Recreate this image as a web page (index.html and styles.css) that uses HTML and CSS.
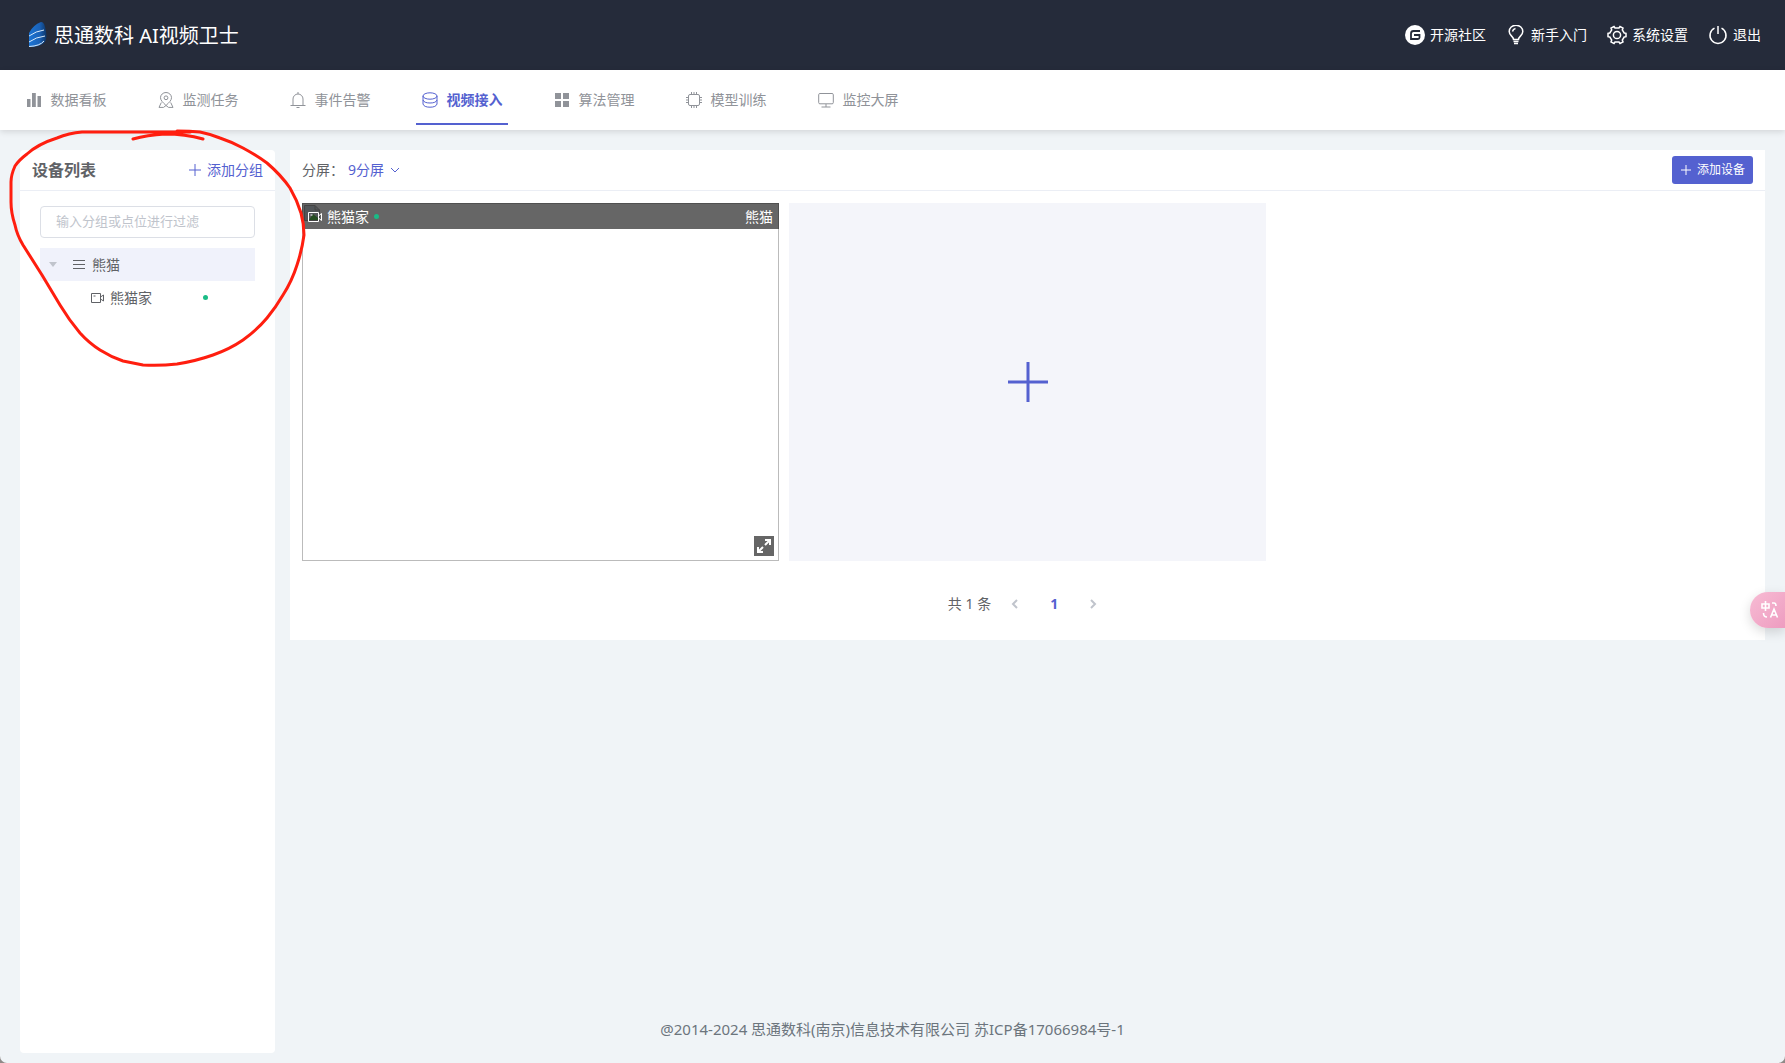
FILE: index.html
```html
<!DOCTYPE html>
<html lang="zh-CN">
<head>
<meta charset="utf-8">
<title>思通数科 AI视频卫士</title>
<link rel="stylesheet" href="styles.css">
</head>
<body>
<header class="topbar">
  <a class="brand" href="#">
    <svg class="brand-logo" viewBox="0 0 20 26">
      <defs><linearGradient id="sail" x1="0" y1="0" x2="1" y2="0"><stop offset="0" stop-color="#1c74d4"/><stop offset=".6" stop-color="#1a62b8"/><stop offset="1" stop-color="#0d3566"/></linearGradient></defs>
      <path d="M1 11Q5 3 13 0Q16 0 17 5Q20 15 17 20Q12 25 1 25Z" fill="url(#sail)"/>
      <path d="M1 14Q8 9 16 8M1 20Q8 15 17 14M1 24.500Q12 24 16 19" fill="none" stroke="#d9ebfa" stroke-width="1"/>
    </svg>
    <span>思通数科 AI视频卫士</span>
  </a>
  <nav class="links">
    <a href="#"><svg viewBox="0 0 20 20"><circle cx="10" cy="10" r="10" fill="#fff" stroke="none"/><path d="M15 6H8.500Q6 6 6 8.500V14H13Q14.500 14 14.500 12.500V10H9" fill="none" stroke="#252b3a" stroke-width="1.800"/></svg>开源社区</a>
    <a href="#"><svg class="line" viewBox="0 0 20 20"><path d="M7.500 14.500C7.500 11.500 3.200 10.500 3.200 6.500A6.800 6.300 0 0 1 16.800 6.500C16.800 10.500 12.500 11.500 12.500 14.500Z M6.500 6.500Q7 4 9.500 3.500M7.500 16.500H12.500M8 18.500H12"/></svg>新手入门</a>
    <a href="#"><svg class="line" viewBox="0 0 20 20"><path d="M7 1.500L8 3H12L13 1.500L16 3.200L15.300 5L17.200 8L19 8.300V11.700L17.200 12L15.300 15L16 16.800L13 18.500L12 17H8L7 18.500L4 16.800L4.700 15L2.800 12L1 11.700V8.300L2.800 8L4.700 5L4 3.200Z"/><circle cx="10" cy="10" r="3.600"/></svg>系统设置</a>
    <a href="#"><svg class="line" viewBox="0 0 20 20"><path d="M10 1V9M6.500 3.200A8 8 0 1 0 13.500 3.200"/></svg>退出</a>
  </nav>
</header>

<nav class="menu">
  <a href="#"><svg class="solid" viewBox="0 0 16 16"><path d="M1 7H4.500V15H1ZM6 1H9.800V15H6ZM11.500 4H15V15H11.500Z"/></svg>数据看板</a>
  <a href="#"><svg class="line" viewBox="0 0 16 16"><path d="M8 13.500C5 10.500 2.500 8.500 2.500 5.700A5.500 5.200 0 0 1 13.500 5.700C13.500 8.500 11 10.500 8 13.500ZM3.300 10.500L1 15.400H5.500L8 13.500L10.500 15.400H15L12.700 10.500"/><circle cx="8" cy="5.800" r="1.900"/></svg>监测任务</a>
  <a href="#"><svg class="line" viewBox="0 0 16 16"><path d="M8 0V2M3 13.500V7A5 5 0 0 1 13 7V13.500M.5 13.500H15.500M6.500 15.500H9.500"/></svg>事件告警</a>
  <a href="#" class="active" aria-current="page"><svg class="line" viewBox="0 0 16 16"><ellipse cx="8" cy="4" rx="7" ry="3.200"/><path d="M1 4V8Q2 11 8 11T15 8V4M1 8V12Q2 15.200 8 15.200T15 12V8"/></svg>视频接入</a>
  <a href="#"><svg class="solid" viewBox="0 0 16 16"><path d="M1 1H7V7H1ZM9 1H15V7H9ZM1 9H7V15H1ZM9 9H15V15H9Z"/></svg>算法管理</a>
  <a href="#"><svg class="line" viewBox="0 0 16 16"><rect x="2.500" y="2.500" width="11" height="11" rx="1.500"/><path d="M5.500 0V2.500M8 0V2.500M10.500 0V2.500M5.500 13.500V16M8 13.500V16M10.500 13.500V16M0 5.500H2.500M0 8H2.500M0 10.500H2.500M13.500 5.500H16M13.500 8H16M13.500 10.500H16"/></svg>模型训练</a>
  <a href="#"><svg class="line" viewBox="0 0 16 16"><rect x=".7" y="1.500" width="14.600" height="10.300" rx="1.200"/><path d="M8 12V15M3.500 15H12.500"/></svg>监控大屏</a>
</nav>

<div class="workspace">
  <aside class="panel devices">
    <div class="panel-head">
      <h2>设备列表</h2>
      <button class="link-btn" type="button"><svg class="line" viewBox="0 0 12 12"><path d="M6 0V12M0 6H12"/></svg>添加分组</button>
    </div>
    <div class="panel-body">
      <input class="filter" type="text" placeholder="输入分组或点位进行过滤" aria-label="过滤设备">
      <ul class="tree">
        <li class="node group"><svg class="caret" viewBox="0 0 8 6"><path d="M0 0H8L4 5Z"/></svg><svg class="bars" viewBox="0 0 12 12"><path d="M0 1.500H12M0 5.500H12M0 9.500H12"/></svg>熊猫</li>
        <li class="node leaf"><svg class="cam" viewBox="0 0 14 10"><path d="M.5 .5H9.500V9.500H.5ZM9.500 4L12.500 2V8L9.500 6M2.500 3H4.500"/></svg>熊猫家<i class="dot"></i></li>
      </ul>
    </div>
  </aside>

  <div class="content">
    <main class="panel">
      <div class="panel-head">
        <div class="split"><span>分屏：</span><button class="link-btn" type="button">9分屏<svg class="line" viewBox="0 0 12 12"><path d="M2 4L6 8L10 4"/></svg></button></div>
        <button class="primary" type="button"><svg class="line" viewBox="0 0 12 12"><path d="M6 1V11M1 6H11"/></svg>添加设备</button>
      </div>
      <div class="screens">
        <section class="screen">
          <div class="screen-head">
            <svg class="broken" viewBox="0 0 16 16"><path d="M.5 15.500V.5H11L15.500 5V15.500Z" fill="#525659" stroke="#444"/><path d="M11 .5V5H15.500" fill="none" stroke="#444"/><path d="M5 15L9 9L14 13V15Z" fill="#254d22"/></svg>
            <svg class="cam" viewBox="0 0 14 10"><path d="M.5 .5H10.500V9.500H.5ZM10.500 4L13.500 1.500V8.500L10.500 6M2.500 3H4.500"/></svg>
            <span>熊猫家</span><i class="dot"></i><span class="owner">熊猫</span>
          </div>
          <button class="expand" type="button" aria-label="全屏"><svg viewBox="0 0 20 20"><path d="M11 9L16 4M11 4H16V9M9 11L4 16M4 11V16H9"/></svg></button>
        </section>
        <button class="screen add" type="button" aria-label="添加设备"><svg viewBox="0 0 42 42"><path d="M21 1V41M1 21H41"/></svg></button>
      </div>
      <div class="pager">
        <span>共 1 条</span>
        <button type="button" aria-label="上一页" disabled><svg viewBox="0 0 12 12"><path d="M8 2L4 6L8 10"/></svg></button>
        <button type="button" class="current">1</button>
        <button type="button" aria-label="下一页" disabled><svg viewBox="0 0 12 12"><path d="M4 2L8 6L4 10"/></svg></button>
      </div>
    </main>
  </div>
</div>
<footer class="footer">@2014-2024 思通数科(南京)信息技术有限公司 苏ICP备17066984号-1</footer>

<button class="translate" type="button" aria-label="翻译"><svg viewBox="0 0 18 18"><path d="M1 3H8V7H1ZM4.500 0V10M11 2H13Q15 2 15 5M2.500 12Q2.500 16 6 16M9.500 16.500L13 8L16.500 16.500M10.500 14H15.500"/></svg></button>
<svg class="marker" width="320" height="380" viewBox="0 0 320 380"><path d="M133 139Q147 135 165 134Q185 134 203 139M177 131Q190 131 200 132Q210 134 220 138Q232 142 243 148Q256 155 267 163Q281 175 290 188Q297 200 301 213Q304 224 304 235Q302 250 297 265Q292 281 283 295Q276 307 267 318Q257 330 243 340Q230 349 213 355Q196 361 177 364Q160 366 143 365Q133 363 123 361Q111 357 100 350Q89 343 80 333Q69 320 60 305L42 275L23 245Q17 235 15 225Q11 213 11 202V182Q11 175 15 166Q19 160 27 154Q38 144 57 138Q69 133 82 132H165L190 132"/></svg>
</body>
</html>
```
FILE: styles.css
```css
* { box-sizing: border-box; }
html { background: #8f8a88; }
body {
  margin: 0;
  min-height: 100vh;
  display: flex;
  flex-direction: column;
  position: relative;
  overflow: hidden;
  border-radius: 0 0 7px 7px;
  background: #f0f4f7;
  color: #606266;
  font: 14px/20px "Noto Sans", "Noto Sans CJK SC", sans-serif;
}
a { color: inherit; text-decoration: none; }
button { font: inherit; color: inherit; border: 0; padding: 0; background: none; cursor: pointer; }
svg { flex: none; fill: none; stroke: currentColor; display: block; }
.solid { fill: currentColor; stroke: none; }

.topbar {
  height: 70px;
  padding: 0 24px 0 28px;
  display: flex;
  align-items: center;
  justify-content: space-between;
  background: #252b3a;
  color: #fff;
}
.brand { display: flex; align-items: center; gap: 6px; font-size: 20px; line-height: 28px; }
.brand span { padding-top: 2px; }
.brand-logo { width: 20px; height: 26px; stroke: none; }
.links { display: flex; gap: 20px; }
.links a { display: flex; align-items: center; gap: 5px; }
.links svg { width: 20px; height: 20px; stroke-width: 1.5; }

.menu {
  height: 60px;
  padding: 0 20px;
  display: flex;
  gap: 40px;
  background: #fff;
  color: #909399;
  box-shadow: 0 2px 6px rgba(0, 0, 0, .12);
}
.menu a {
  width: 92px;
  height: 55px;
  padding-top: 6px;
  display: flex;
  align-items: center;
  justify-content: center;
  gap: 9px;
  border-bottom: 2px solid transparent;
}
.menu svg { width: 16px; height: 16px; }
.menu .active { color: #5461d0; border-color: #5461d0; font-weight: 700; }

.workspace {
  flex: 1;
  padding: 20px 20px 10px;
  display: flex;
  gap: 15px;
}
.panel { background: #fff; }
.panel-head {
  height: 41px;
  padding: 0 12px;
  display: flex;
  align-items: center;
  justify-content: space-between;
  border-bottom: 1px solid #ebeef5;
}
.devices { width: 255px; border-radius: 4px; }
.devices h2 { margin: 0; font-size: 16px; line-height: 24px; }
.link-btn { display: flex; align-items: center; gap: 6px; color: #5461d0; }
.link-btn svg, .primary svg { width: 12px; height: 12px; }
.panel-body { padding: 15px 20px; }
.filter {
  width: 100%;
  height: 32px;
  padding: 0 15px 2px;
  border: 1px solid #dcdfe6;
  border-radius: 4px;
  background: #fff;
  color: inherit;
  font: 13px/20px "Noto Sans", "Noto Sans CJK SC", sans-serif;
}
.filter::placeholder { color: #c0c4cc; opacity: 1; }
.tree { list-style: none; margin: 10px 0 0; padding: 0; }
.node { height: 33px; display: flex; align-items: center; gap: 7px; }
.group { padding-left: 9px; background: #f0f2fb; }
.caret { width: 8px; height: 6px; margin-right: 9px; fill: #c0c4cc; stroke: none; }
.bars { width: 12px; height: 12px; }
.leaf { padding-left: 51px; }
.cam { width: 14px; height: 10px; }
.node .cam { margin-right: -2px; }
.dot { width: 5px; height: 5px; border-radius: 50%; background: #1abc86; }
.node .dot { margin: 0 auto 0 44px; }

.content { flex: 1; min-width: 0; }
.split { display: flex; }
.split .link-btn { gap: 5px; margin-left: 4px; }
.primary {
  height: 28px;
  padding: 0 8px;
  display: flex;
  align-items: center;
  gap: 5px;
  border-radius: 3px;
  background: #5461d0;
  color: #fff;
  font-size: 12px;
}
.screens {
  padding: 12px;
  display: grid;
  grid-template-columns: repeat(3, 1fr);
  gap: 10px;
}
.screen { position: relative; aspect-ratio: 4 / 3; border: 1px solid #bbb; }
.screen-head {
  height: 26px;
  margin: -1px -1px 0;
  padding: 0 5px;
  display: flex;
  align-items: center;
  gap: 5px;
  border: 1px solid #505050;
  border-bottom: 0;
  background: #666;
  color: #fff;
}
.broken { position: absolute; left: 1px; top: 1px; width: 16px; height: 16px; stroke: none; }
.screen-head .cam { position: relative; }
.owner { margin-left: auto; }
.expand { position: absolute; right: 4px; bottom: 4px; width: 20px; height: 20px; background: #666; color: #fff; }
.expand svg { stroke-width: 2; }
.add { border: 0; background: #f4f5fa; color: #5461d0; display: flex; align-items: center; justify-content: center; }
.add svg { width: 42px; height: 42px; stroke-width: 3; }

.pager {
  padding: 17px 0 22px;
  display: flex;
  justify-content: center;
  align-items: center;
  font-size: 14px;
  line-height: 28px;
}
.pager span { margin-right: 10px; }
.pager button { width: 28px; height: 28px; margin-right: 11px; display: flex; align-items: center; justify-content: center; }
.pager button:last-child { margin-right: 0; }
.pager svg { width: 12px; height: 12px; stroke: #c0c4cc; stroke-width: 2; }
.pager .current { color: #5461d0; font-weight: 700; }

.footer { position: absolute; left: 0; right: 0; bottom: 24px; text-align: center; font-size: 15px; line-height: 20px; color: #6c757d; }

.translate {
  position: absolute;
  right: 0;
  top: 592px;
  width: 35px;
  height: 36px;
  padding-left: 11px;
  border-radius: 18px 0 0 18px;
  background: linear-gradient(135deg, #f7bcd4, #ee9cc0);
  box-shadow: 0 4px 12px rgba(0, 0, 0, .15);
  color: #fff;
}
.translate svg { width: 18px; height: 18px; stroke-width: 1.6; }
.marker { position: absolute; left: 0; top: 0; pointer-events: none; stroke: #ff1e0f; stroke-width: 3; stroke-linejoin: round; stroke-linecap: round; }
```
